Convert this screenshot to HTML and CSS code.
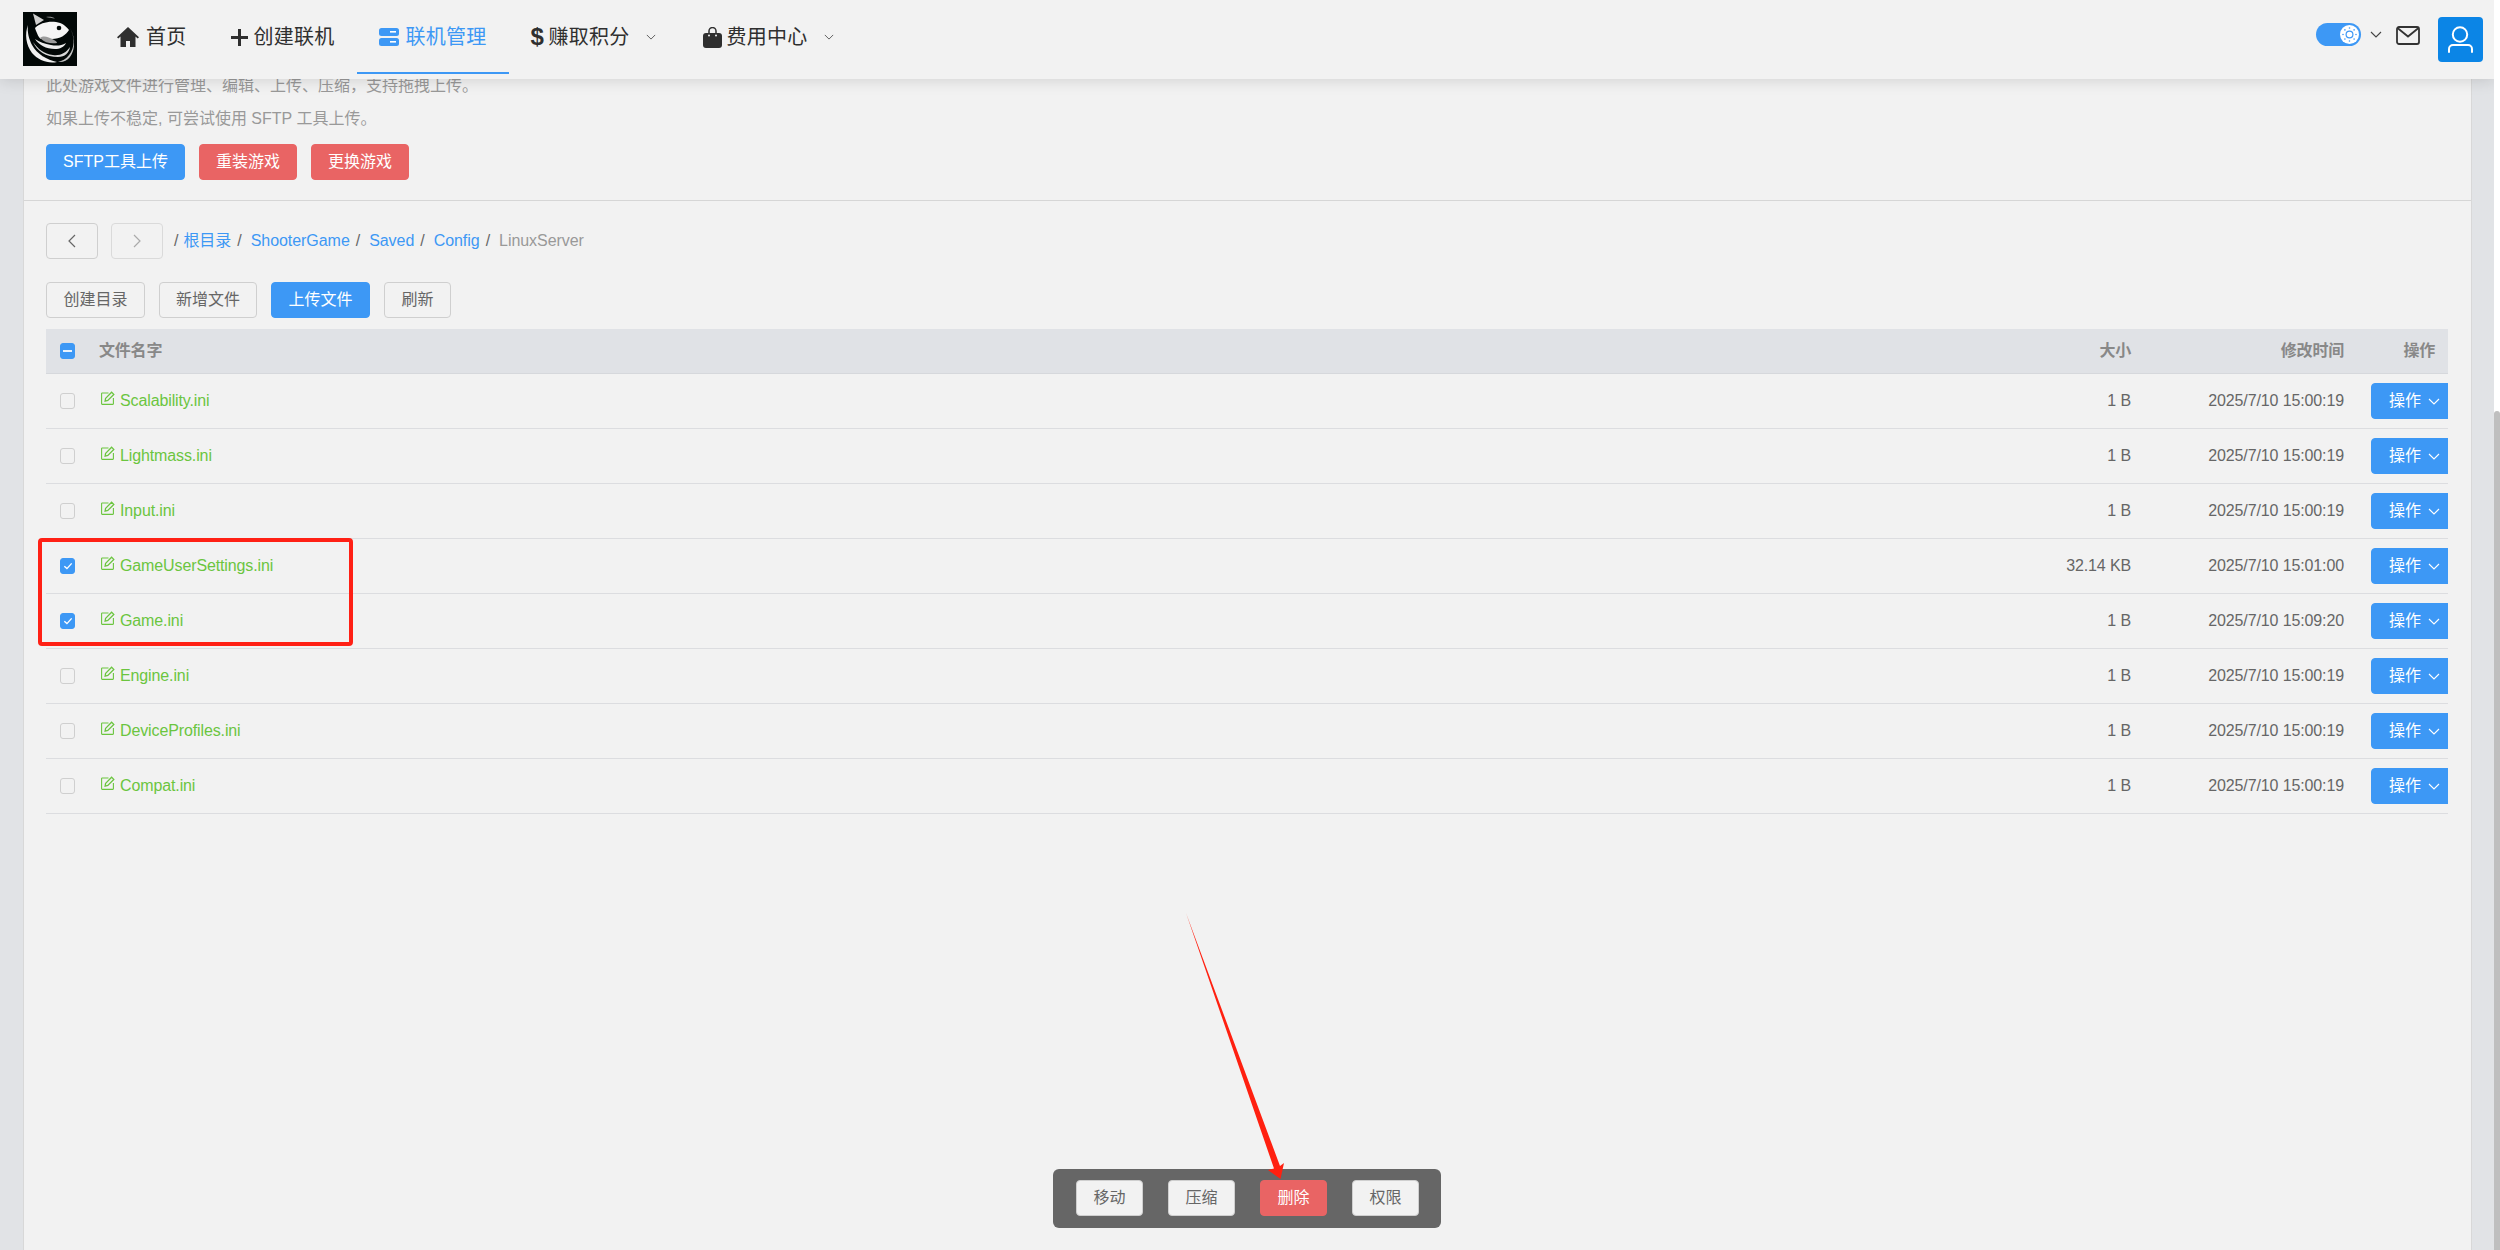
FILE: index.html
```html
<!DOCTYPE html>
<html lang="zh">
<head>
<meta charset="utf-8">
<title>文件管理</title>
<link rel="stylesheet" href="styles.css">
</head>
<body>
<svg class="defs" width="0" height="0" aria-hidden="true">
  <symbol id="edit" viewBox="0 0 14 14">
    <path d="M7.5 2H1.2a.6.6 0 0 0-.6.6v10.2a.6.6 0 0 0 .6.6h10.6a.6.6 0 0 0 .6-.6V7" fill="none" stroke="currentColor" stroke-width="1.1"/>
    <path d="M4.6 7.4 10.6 1.2l2.2 2.2-6 6.1-2.7.6z" fill="none" stroke="currentColor" stroke-width="1.3"/>
  </symbol>
  <symbol id="chev" viewBox="0 0 12 7">
    <path d="M1 1l5 5 5-5" fill="none" stroke="currentColor" stroke-width="1.1"/>
  </symbol>
  <symbol id="tick" viewBox="0 0 16 16">
    <path d="M3.8 8.3 6.8 11l5.4-6" fill="none" stroke="currentColor" stroke-width="1.6"/>
  </symbol>
</svg>
<div class="page">
  <div class="main">
    <header class="topbar">
      <svg class="logo" viewBox="0 0 54 54">
        <rect width="54" height="54" fill="#020807"/>
        <path d="M10 1.500 21 8 13 13z" fill="#cfcfcf"/>
        <path d="M23 5c3-.8 7-.3 9 1.500-3-.6-6-.6-9-1.500z" fill="#9a9a9a"/>
        <path d="M5 13C1.500 22 3 33 9 41c6 7 16 11 25 9-10-2-20-8-25-17-3-6-5-13-4-20z" fill="#f0f0f0"/>
        <path d="M10 30c4 9 13 15 25 15 7 0 11-4 12-10-4 6-10 9-17 8-9-1-15-6-20-13z" fill="#d8d8d8"/>
        <path d="M12 27c4 6 11 10 20 10 5 0 9-2 11-6-5 3-10 3-15 2-6-1-12-3-16-6z" fill="#ededed"/>
        <path d="M47 16c5 9 5 20-1 27-3 4-7 6-11 7 10 1 15-7 16-16 .5-7-1-13-4-18z" fill="#c4c4c4"/>
        <path d="M12 16c5-5 13-7 21-6 6 .8 10 4 13 8-3 5-9 9-17 9-5 0-8-1-11 0-2-1-4-5-6-11z" fill="#f5f5f5"/>
        <path d="M17 26c4-3 8-1 14 2 2 1 3 2 3 3-6 1-12 0-17-5z" fill="#9c9c9c"/>
        <circle cx="36" cy="16" r="2.300" fill="#020807"/>
      </svg>
      <nav class="nav">
        <a class="nav-item">
          <svg class="ic-home" viewBox="0 0 22 20"><path fill="#2f2f2f" d="M11 0 0 10.200 1.300 11.600 3.500 9.600V20H9v-6h4v6h5.500V9.600l2.200 2 1.300-1.400z"/></svg>
          <span>首页</span>
        </a>
        <a class="nav-item">
          <svg class="ic-plus" viewBox="0 0 17 17"><path fill="#2f2f2f" d="M7 0h3v7h7v3h-7v7H7v-7H0V7h7z"/></svg>
          <span>创建联机</span>
        </a>
        <a class="nav-item active">
          <svg class="ic-server" viewBox="0 0 20 18"><rect width="20" height="8" rx="2.500" fill="#3d98f5"/><rect y="10" width="20" height="8" rx="2.500" fill="#3d98f5"/><rect x="11" y="3" width="6" height="1.600" fill="#fff"/><rect x="11" y="13" width="6" height="1.600" fill="#fff"/></svg>
          <span>联机管理</span>
        </a>
        <a class="nav-item drop">
          <span class="dollar">$</span>
          <span>赚取积分</span>
          <svg class="ic-chev" ><use href="#chev"/></svg>
        </a>
        <a class="nav-item drop">
          <svg class="ic-bag" viewBox="0 0 19 21"><path fill="none" stroke="#2f2f2f" stroke-width="1.500" d="M6 8V4a3.500 3.500 0 0 1 7 0v4"/><rect y="6" width="19" height="15" rx="3" fill="#2f2f2f"/><circle cx="6" cy="8.500" r="1" fill="#f2f2f2"/><circle cx="13" cy="8.500" r="1" fill="#f2f2f2"/></svg>
          <span>费用中心</span>
          <svg class="ic-chev"><use href="#chev"/></svg>
        </a>
      </nav>
      <div class="tools">
        <div class="toggle">
          <span class="knob">
            <svg viewBox="0 0 19 19"><circle cx="9.500" cy="9.500" r="3.400" fill="none" stroke="#3d98f5" stroke-width="1.200"/><g fill="#3d98f5"><circle cx="9.500" cy="3" r=".8"/><circle cx="9.500" cy="16" r=".8"/><circle cx="3" cy="9.500" r=".8"/><circle cx="16" cy="9.500" r=".8"/><circle cx="4.900" cy="4.900" r=".8"/><circle cx="14.100" cy="4.900" r=".8"/><circle cx="4.900" cy="14.100" r=".8"/><circle cx="14.100" cy="14.100" r=".8"/></g></svg>
          </span>
        </div>
        <svg class="ic-chev-dark"><use href="#chev"/></svg>
        <svg class="ic-mail" viewBox="0 0 24 19"><rect x="1" y="1" width="22" height="17" rx="2" fill="none" stroke="#333" stroke-width="1.800"/><path d="M1.500 2 12 10.500 22.500 2" fill="none" stroke="#333" stroke-width="1.800"/></svg>
        <div class="avatar">
          <svg viewBox="0 0 45 45"><circle cx="22" cy="17.500" r="7.200" fill="none" stroke="#fff" stroke-width="2"/><path d="M11 35v-3a4 4 0 0 1 4-4h15a4 4 0 0 1 4 4v3" fill="none" stroke="#fff" stroke-width="2" stroke-linecap="round"/></svg>
        </div>
      </div>
    </header>

    <main class="card">
      <section class="intro">
        <p class="hint">此处游戏文件进行管理、编辑、上传、压缩，支持拖拽上传。</p>
        <p class="hint">如果上传不稳定, 可尝试使用 SFTP 工具上传。</p>
        <div class="intro-actions">
          <button class="btn primary wide">SFTP工具上传</button>
          <button class="btn danger narrow">重装游戏</button>
          <button class="btn danger narrow">更换游戏</button>
        </div>
      </section>
      <section class="browser">
        <div class="pathbar">
          <button class="btn nav-btn"><svg viewBox="0 0 8 14"><path d="M7 1 1 7l6 6" fill="none" stroke="#666" stroke-width="1.200"/></svg></button>
          <button class="btn nav-btn off"><svg viewBox="0 0 8 14"><path d="M1 1l6 6-6 6" fill="none" stroke="#aaa" stroke-width="1.200"/></svg></button>
          <div class="crumbs">
            <span class="sep first">/</span><a>根目录</a><span class="sep">/</span><a>ShooterGame</a><span class="sep">/</span><a>Saved</a><span class="sep">/</span><a>Config</a><span class="sep">/</span><span class="here">LinuxServer</span>
          </div>
        </div>
        <div class="file-actions">
          <button class="btn">创建目录</button>
          <button class="btn narrow">新增文件</button>
          <button class="btn primary">上传文件</button>
          <button class="btn short">刷新</button>
        </div>
        <div class="table-wrap">
          <table class="files">
            <colgroup><col class="c-check"><col><col class="c-size"><col class="c-time"><col class="c-op"></colgroup>
            <thead>
              <tr>
                <th class="check"><span class="box mixed"></span></th>
                <th class="name">文件名字</th>
                <th class="right">大小</th>
                <th class="right">修改时间</th>
                <th class="right op-head">操作</th>
              </tr>
            </thead>
            <tbody>
              <tr><td class="check"><span class="box"></span></td><td class="name"><a class="file"><svg><use href="#edit"/></svg><span>Scalability.ini</span></a></td><td class="right">1 B</td><td class="right">2025/7/10 15:00:19</td><td class="op"><button class="btn primary op-btn">操作<svg><use href="#chev"/></svg></button></td></tr>
              <tr><td class="check"><span class="box"></span></td><td class="name"><a class="file"><svg><use href="#edit"/></svg><span>Lightmass.ini</span></a></td><td class="right">1 B</td><td class="right">2025/7/10 15:00:19</td><td class="op"><button class="btn primary op-btn">操作<svg><use href="#chev"/></svg></button></td></tr>
              <tr><td class="check"><span class="box"></span></td><td class="name"><a class="file"><svg><use href="#edit"/></svg><span>Input.ini</span></a></td><td class="right">1 B</td><td class="right">2025/7/10 15:00:19</td><td class="op"><button class="btn primary op-btn">操作<svg><use href="#chev"/></svg></button></td></tr>
              <tr><td class="check"><span class="box on"><svg><use href="#tick"/></svg></span></td><td class="name"><a class="file"><svg><use href="#edit"/></svg><span>GameUserSettings.ini</span></a></td><td class="right">32.14 KB</td><td class="right">2025/7/10 15:01:00</td><td class="op"><button class="btn primary op-btn">操作<svg><use href="#chev"/></svg></button></td></tr>
              <tr><td class="check"><span class="box on"><svg><use href="#tick"/></svg></span></td><td class="name"><a class="file"><svg><use href="#edit"/></svg><span>Game.ini</span></a></td><td class="right">1 B</td><td class="right">2025/7/10 15:09:20</td><td class="op"><button class="btn primary op-btn">操作<svg><use href="#chev"/></svg></button></td></tr>
              <tr><td class="check"><span class="box"></span></td><td class="name"><a class="file"><svg><use href="#edit"/></svg><span>Engine.ini</span></a></td><td class="right">1 B</td><td class="right">2025/7/10 15:00:19</td><td class="op"><button class="btn primary op-btn">操作<svg><use href="#chev"/></svg></button></td></tr>
              <tr><td class="check"><span class="box"></span></td><td class="name"><a class="file"><svg><use href="#edit"/></svg><span>DeviceProfiles.ini</span></a></td><td class="right">1 B</td><td class="right">2025/7/10 15:00:19</td><td class="op"><button class="btn primary op-btn">操作<svg><use href="#chev"/></svg></button></td></tr>
              <tr><td class="check"><span class="box"></span></td><td class="name"><a class="file"><svg><use href="#edit"/></svg><span>Compat.ini</span></a></td><td class="right">1 B</td><td class="right">2025/7/10 15:00:19</td><td class="op"><button class="btn primary op-btn">操作<svg><use href="#chev"/></svg></button></td></tr>
            </tbody>
          </table>
        </div>
      </section>
    </main>

    <div class="redbox"></div>
    <svg class="arrow" viewBox="0 0 110 280"><polygon fill="#ff2010" points="1,3 95,256 99,253 95.500,269 83,260 89,258.500"/></svg>
    <div class="batch">
      <button class="btn batch-btn">移动</button>
      <button class="btn batch-btn">压缩</button>
      <button class="btn batch-btn danger">删除</button>
      <button class="btn batch-btn">权限</button>
    </div>
  </div>
  <div class="scrollbar"><div class="thumb"></div></div>
</div>
</body>
</html>
```
FILE: styles.css
```css
* { box-sizing: border-box; }
html, body { margin: 0; height: 100%; overflow: hidden; background: #fff; }
body { font: 16px/22px "Liberation Sans", "Noto Sans CJK SC", sans-serif; color: #666; }
.defs { position: absolute; }
a { color: inherit; text-decoration: none; }
p { margin: 0; }

.page { display: flex; height: 1250px; }
.main { position: relative; width: 2494px; flex: none; height: 1250px; overflow: hidden; background: #e1e3e6; display: flex; flex-direction: column; }
.scrollbar { width: 6px; flex: none; padding-top: 411px; background: #fff; }
.thumb { height: 839px; background: #bfbfbf; border-radius: 3px 3px 0 0; }

.topbar { position: relative; z-index: 2; flex: none; height: 79px; display: flex; align-items: flex-start; background: #f2f2f2; box-shadow: 0 2px 14px rgba(0,0,0,.13); }
.logo { width: 54px; height: 54px; margin: 12px 18px 0 23px; flex: none; }
.nav { display: flex; height: 74px; }
.nav-item { display: flex; align-items: center; height: 74px; padding: 2px 22px 0 22px; font-size: 20px; color: #2f2f2f; border-bottom: 2px solid transparent; white-space: nowrap; }
.nav-item span { letter-spacing: .25px; }
.nav-item.active { color: #3d98f5; border-bottom-color: #3d98f5; }
.nav-item.drop { padding-right: 25px; }
.ic-home { width: 22px; height: 20px; margin-right: 7px; }
.ic-plus { width: 17px; height: 17px; margin-right: 6px; }
.ic-server { width: 20px; height: 18px; margin-right: 7px; }
.ic-bag { width: 19px; height: 21px; margin-right: 5px; }
.dollar { font-weight: 700; font-size: 24px; width: 13px; margin-right: 5px; display: block; text-align: center; }
.ic-chev { width: 10px; height: 6px; margin-left: 16px; color: #555; }

.tools { margin-left: auto; display: flex; align-items: center; padding: 17px 11px 0 0; }
.toggle { width: 45px; height: 23px; border-radius: 12px; background: #3d98f5; padding: 2px 2px 2px 24px; margin-top: -11px; }
.knob { display: block; width: 19px; height: 19px; border-radius: 50%; background: #fff; }
.knob svg { display: block; width: 19px; height: 19px; }
.ic-chev-dark { width: 12px; height: 7px; margin: -11px 14px 0 9px; color: #444; }
.ic-mail { width: 24px; height: 19px; margin: -8px 18px 0 0; }
.avatar { width: 45px; height: 45px; background: #0b85e6; border-radius: 4px; }
.avatar svg { display: block; width: 45px; height: 45px; }

.card { flex: 1; margin: 0 22px 0 23px; background: #f2f2f2; border-left: 1px solid #d8d8d8; border-right: 1px solid #d8d8d8; }
.intro { margin-top: -4px; padding: 0 22px 20px; border-bottom: 1px solid #d6d6d6; }
.hint { color: #999; margin-bottom: 11px; }
.intro-actions { display: flex; gap: 14px; margin-top: 14px; }

.btn { height: 36px; padding: 0; width: 99px; font: inherit; color: #666; background: #f2f2f2; border: 1px solid #cfcfcf; border-radius: 4px; display: flex; align-items: center; justify-content: center; }
.btn.primary { background: #3d98f5; border-color: #3d98f5; color: #fff; }
.btn.danger { background: #e96464; border-color: #e96464; color: #fff; }
.btn.wide { width: 139px; }
.btn.narrow { width: 98px; }
.btn.short { width: 67px; }

.browser { padding: 22px 22px 0; }
.pathbar { display: flex; align-items: center; }
.nav-btn { width: 52px; margin-right: 13px; }
.nav-btn svg { width: 8px; height: 14px; }
.nav-btn.off { border-color: #dadada; }
.crumbs { display: flex; margin-left: -2px; color: #666; letter-spacing: -.05px; }
.crumbs a { color: #3d98f5; }
.sep { margin: 0 9px 0 6px; color: #666; }
.sep.first { margin: 0 5px 0 0; }
.here { color: #999; }

.file-actions { display: flex; gap: 14px; margin-top: 23px; }
.table-wrap { margin-top: 11px; width: 2402px; overflow: hidden; }
.files { width: 100%; border-collapse: separate; border-spacing: 0; table-layout: fixed; }
.c-check { width: 53px; }
.c-size { width: 100px; }
.c-time { width: 213px; }
.c-op { width: 104px; }
.files th { height: 45px; padding: 0; background: #e0e2e6; border-bottom: 1px solid #d6d8dc; color: #888; font-weight: 700; text-align: left; letter-spacing: -.2px; }
.files td { height: 55px; padding: 0; border-bottom: 1px solid #dcdde0; color: #666; letter-spacing: -.12px; }
.files .check { padding-left: 14px; }
.files .right { text-align: right; }
.op-head { padding-right: 13px !important; }
.op { padding-left: 27px !important; overflow: hidden; }

.box { display: block; width: 15px; height: 16px; border: 1px solid #cfcfcf; border-radius: 3px; background: #f2f2f2; }
.box.on, .box.mixed { background: #3d98f5; border-color: #3d98f5; color: #fff; position: relative; }
.box svg { display: block; width: 14px; height: 14px; }
.box.mixed::after { content: ""; position: absolute; left: 2px; right: 2px; top: 6px; height: 2px; background: #e8f2fd; }

.file { display: flex; align-items: center; color: #6bc53f; }
.file svg { width: 14px; height: 14px; margin: -6px 5px 0 2px; flex: none; }

.op-btn { width: 87px; justify-content: flex-start; padding-left: 17px; }
.op-btn svg { width: 12px; height: 7px; margin-left: 7px; }

.redbox { position: absolute; left: 38px; top: 538px; width: 315px; height: 108px; border: 4px solid #ff2015; border-radius: 4px; z-index: 3; }
.arrow { position: absolute; left: 1185px; top: 910px; width: 110px; height: 280px; z-index: 5; }
.batch { position: absolute; left: 1053px; top: 1169px; width: 388px; height: 59px; padding: 11px 22px 0 23px; background: #666; border-radius: 6px; display: flex; gap: 25px; z-index: 4; }
.batch-btn { width: 67px; }
```
